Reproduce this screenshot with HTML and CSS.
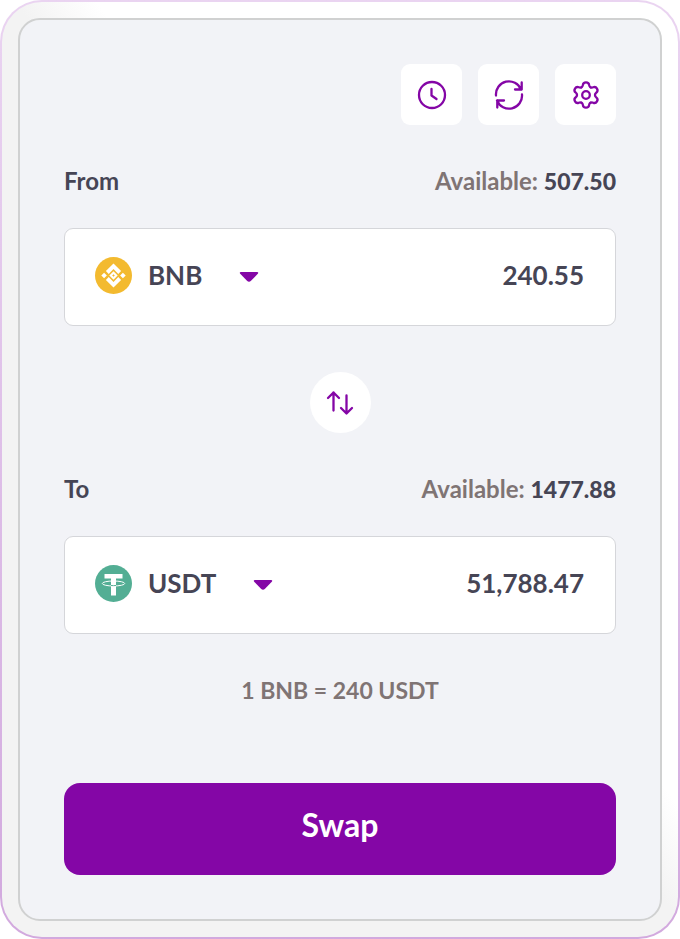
FILE: index.html
```html
<!DOCTYPE html>
<html lang="en">
<head>
<meta charset="utf-8">
<meta name="viewport" content="width=device-width, initial-scale=1">
<title>Swap</title>
<link rel="stylesheet" href="styles.css">
</head>
<body>
<main class="frame">
  <form class="panel">
    <div class="toolbar">
      <button class="tool" type="button" aria-label="History">
        <svg class="icon" viewBox="0 0 32 32"><circle cx="16" cy="16" r="13"/><path d="M15.500 10V16.500L20.500 20"/></svg>
      </button>
      <button class="tool" type="button" aria-label="Refresh">
        <svg class="icon" viewBox="0 0 32 32"><path d="M3 16.500A13 13 0 0 1 28 10.500M28.700 3.500V10.500H22M29 15.500A13 13 0 0 1 4 21.500M4.300 28.500V21.500H11"/></svg>
      </button>
      <button class="tool" type="button" aria-label="Settings">
        <svg class="icon" viewBox="-16 -16 32 32">
          <circle r="3.800"/>
          <path id="tooth" d="M-4.500 -7.800C-3.400 -8.400 -3.200 -9 -3.100 -10C-2.800 -13.600 2.800 -13.600 3.100 -10C3.200 -9 3.400 -8.400 4.500 -7.800"/>
          <use href="#tooth" transform="rotate(60)"/>
          <use href="#tooth" transform="rotate(120)"/>
          <use href="#tooth" transform="rotate(180)"/>
          <use href="#tooth" transform="rotate(240)"/>
          <use href="#tooth" transform="rotate(300)"/>
        </svg>
      </button>
    </div>

    <section class="side">
      <div class="caption">
        <label for="from-amount">From</label>
        <span class="available">Available: <b>507.50</b></span>
      </div>
      <div class="field">
        <svg class="coin" viewBox="0 0 37 37" aria-hidden="true">
          <circle cx="18.500" cy="18.500" r="18.500" fill="#f3ba2f"/>
          <g fill="#fff"><path d="M18.500 6.500L26.100 14.100L23.300 16.900L18.500 12.100L13.700 16.900L10.900 14.100ZM18.500 30.500L10.900 22.900L13.700 20.100L18.500 24.900L23.300 20.100L26.100 22.900ZM9.100 15.700L11.900 18.500L9.100 21.300L6.300 18.500ZM27.900 15.700L30.700 18.500L27.900 21.300L25.100 18.500Z"/><path fill-rule="evenodd" d="M18.500 14.300L22.700 18.500L18.500 22.700L14.300 18.500ZM18.500 17.200L17.200 18.500L18.500 19.800L19.800 18.500Z"/></g>
        </svg>
        <select class="token" aria-label="Token to sell"><option>BNB</option></select>
        <svg class="caret" viewBox="0 0 20 16" aria-hidden="true"><path d="M2 5H18Q20 5 18.800 6.800L12 13.800Q10 15.600 8 13.800L1.200 6.800Q0 5 2 5Z"/></svg>
        <input class="amount" id="from-amount" type="text" inputmode="decimal" value="240.55">
      </div>
    </section>

    <button class="flip" type="button" aria-label="Switch tokens">
      <svg class="icon" viewBox="0 0 32 32"><path d="M9.500 23.500V5.500M4 11L9.500 5.500L15 11M22.500 8.500V26.500M17 21L22.500 26.500L28 21"/></svg>
    </button>

    <section class="side">
      <div class="caption">
        <label for="to-amount">To</label>
        <span class="available">Available: <b>1477.88</b></span>
      </div>
      <div class="field">
        <svg class="coin" viewBox="0 0 37 37" aria-hidden="true">
          <circle cx="18.500" cy="18.500" r="18.500" fill="#53ae94"/>
          <path fill="#fff" d="M9.500 9H27.500V13.500H21V30.500H16V13.500H9.500Z"/>
          <ellipse cx="18.500" cy="18.500" rx="11.200" ry="2.500" fill="none" stroke="#fff"/>
          <path d="M16 20.500Q18.500 20.800 21 20.500" fill="none" stroke="#53ae94"/>
        </svg>
        <select class="token" aria-label="Token to buy"><option>USDT</option></select>
        <svg class="caret" viewBox="0 0 20 16" aria-hidden="true"><path d="M2 5H18Q20 5 18.800 6.800L12 13.800Q10 15.600 8 13.800L1.200 6.800Q0 5 2 5Z"/></svg>
        <input class="amount" id="to-amount" type="text" inputmode="decimal" value="51,788.47">
      </div>
    </section>

    <p class="rate">1 BNB = 240 USDT</p>
    <button class="submit" type="submit">Swap</button>
  </form>
</main>
</body>
</html>
```

FILE: styles.css
```css
* { box-sizing: border-box; }

body {
  margin: 0;
  background: #fff;
  color: #464555;
  font-family: Lato, "Liberation Sans", sans-serif;
  font-size: 23px;
  font-weight: 700;
  line-height: 28px;
}

button, input, select {
  margin: 0;
  padding: 0;
  border: 0;
  font: inherit;
  color: inherit;
}

button, select { cursor: pointer; }

.frame {
  padding: 16px;
  border: 2px solid transparent;
  border-radius: 42px;
  background:
    linear-gradient(to top right, #f3f3f3 51%, #fff 57%) padding-box,
    linear-gradient(#ead4f1, #d2a9de) border-box;
}

.panel {
  display: flex;
  flex-direction: column;
  padding: 44px;
  border: 2px solid #d0d1d1;
  border-radius: 22px;
  background: #f2f3f7;
}

.toolbar {
  display: flex;
  justify-content: flex-end;
  gap: 16px;
  margin-bottom: 42px;
}

.tool, .flip {
  display: grid;
  place-items: center;
  width: 61px;
  height: 61px;
  border-radius: 9px;
  background: #fff;
}

.flip {
  align-self: center;
  margin: 46px 0 42px;
  border-radius: 50%;
}

.icon {
  width: 32px;
  height: 32px;
  fill: none;
  stroke: #8406a6;
  stroke-width: 2.3;
  stroke-linecap: round;
  stroke-linejoin: round;
}

.caption {
  display: flex;
  justify-content: space-between;
  margin-bottom: 33px;
  font-size: 24px;
}

.available { color: #7f7474; }
.available b { color: #464555; font-size: 23px; }

.field {
  display: flex;
  align-items: center;
  height: 98px;
  padding: 0 31px 4px 30px;
  border: 1px solid #d5d6da;
  border-radius: 9px;
  background: #fff;
  font-size: 26px;
  line-height: 36px;
}

.coin {
  flex: none;
  width: 37px;
  height: 37px;
  margin-right: 16px;
}

.token {
  appearance: none;
  background: none;
}

.caret {
  flex: none;
  width: 20px;
  height: 16px;
  margin-left: 36px;
  fill: #8406a6;
}

.amount {
  flex: 1;
  min-width: 0;
  background: none;
  text-align: right;
}

.rate {
  margin: 42px 0 79px;
  color: #7f7474;
  text-align: center;
}

.submit {
  height: 92px;
  padding-bottom: 8px;
  border-radius: 16px;
  background: #8406a6;
  color: #fff;
  font-size: 32px;
}
```
